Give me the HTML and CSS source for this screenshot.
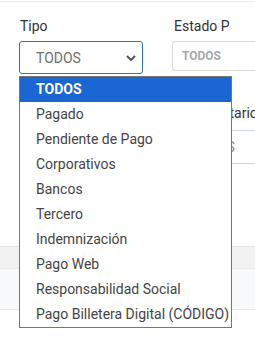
FILE: index.html
```html
<!DOCTYPE html>
<html lang="es">
<head>
<meta charset="utf-8">
<link rel="stylesheet" href="styles.css">
</head>
<body>
<div class="topline"></div>
<div class="page">
  <div class="filters">
    <div class="field">
      <label class="label">Tipo</label>
      <div class="select">
        <span class="select-text">TODOS</span>
        <svg class="chev" width="10" height="6" viewBox="0 0 10 6"><path d="M1 1 L5 5 L9 1" fill="none" stroke="#555" stroke-width="2"/></svg>
      </div>
    </div>
    <div class="field">
      <label class="label">Estado P</label>
      <div class="input"><span class="input-text">TODOS</span></div>
    </div>
    <div class="field">
      <label class="label">&nbsp;</label>
      <div class="input2"></div>
    </div>
    <div class="field">
      <label class="label label-indent">Comentario</label>
      <div class="input2"><span class="input2-text">TODOS</span></div>
    </div>
  </div>
  <div class="table">
    <div class="thead"></div>
    <div class="trow"></div>
  </div>
  <ul class="dropdown">
    <li class="opt active">TODOS</li>
    <li class="opt">Pagado</li>
    <li class="opt">Pendiente de Pago</li>
    <li class="opt">Corporativos</li>
    <li class="opt">Bancos</li>
    <li class="opt">Tercero</li>
    <li class="opt">Indemnización</li>
    <li class="opt">Pago Web</li>
    <li class="opt">Responsabilidad Social</li>
    <li class="opt">Pago Billetera Digital (CÓDIGO)</li>
  </ul>
</div>
</body>
</html>
```
FILE: styles.css
```css
html {
  overflow: hidden;
}
body {
  margin: 0;
  padding: 0;
  height: 356px;
  background: #fff;
  font-family: Roboto, "Liberation Sans", sans-serif;
}
.topline {
  height: 1px;
  border-bottom: 1px solid #ebebeb;
}
.page {
  position: relative;
  height: 354px;
}
.filters {
  display: grid;
  grid-template-columns: 124px 1fr;
  column-gap: 30px;
  row-gap: 31px;
  padding: 16px 0 0 19px;
  align-items: start;
  overflow: hidden;
}
.field {
  display: flex;
  flex-direction: column;
  min-width: 0;
}
.label {
  font-size: 14px;
  line-height: 16px;
  color: #333;
  margin-left: 1px;
  white-space: nowrap;
}
.label-indent {
  padding-left: 11px;
}
.select {
  margin-top: 7px;
  height: 31px;
  border: 1px solid #2f72b3;
  border-radius: 3px;
  display: flex;
  align-items: center;
  justify-content: space-between;
  padding: 0 6px 0 16px;
}
.select-text {
  font-size: 14px;
  color: #6f6f6f;
}
.chev {
  display: block;
}
.input {
  margin-top: 7px;
  height: 28px;
  border: 1px solid #dcdcdc;
  border-right: 0;
  border-radius: 3px 0 0 3px;
  margin-left: -1px;
  display: flex;
  align-items: center;
  padding-left: 9px;
}
.input-text {
  font-size: 12px;
  font-weight: bold;
  color: #a9a9a9;
}
.input2 {
  margin-top: 9px;
  height: 32px;
  border-top: 1px solid #cdd5dc;
  border-bottom: 1px solid #cdd5dc;
  display: flex;
  align-items: center;
  padding-left: 17px;
}
.input2-text {
  font-size: 14px;
  color: #8a8a8a;
}
.table {
  margin-top: 82px;
}
.thead {
  height: 21px;
  background: #f2f2f2;
  border-top: 1px solid #e6e6e6;
  border-bottom: 1px solid #e9e9e9;
}
.trow {
  height: 40px;
  background: #f8f9fa;
  border-bottom: 1px solid #e9ecef;
}
.dropdown {
  position: absolute;
  top: 74px;
  left: 19px;
  width: 211px;
  margin: 0;
  padding: 0;
  list-style: none;
  background: #fff;
  border: 1px solid #767676;
}
.opt {
  height: 25px;
  line-height: 25px;
  padding-left: 16px;
  font-size: 14px;
  color: #444;
  white-space: nowrap;
}
.opt.active {
  background: #1a66d2;
  color: #fff;
  font-weight: bold;
}
```
